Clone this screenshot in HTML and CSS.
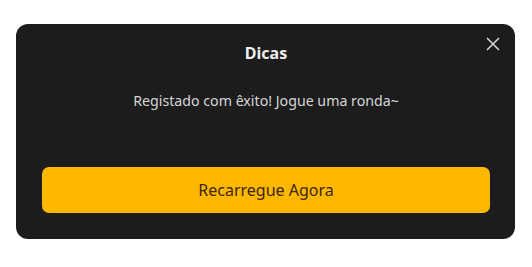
FILE: index.html
```html
<!DOCTYPE html>
<html lang="pt">
<head>
<meta charset="utf-8">
<link rel="stylesheet" href="styles.css">
</head>
<body>
<div class="modal">
  <div class="modal-header">
    <h2 class="modal-title">Dicas</h2>
    <button class="close" aria-label="Fechar">
      <svg width="14" height="14" viewBox="0 0 14 14"><path d="M1 1 L13 13 M13 1 L1 13" stroke="#d8d8d8" stroke-width="1.5" fill="none"/></svg>
    </button>
  </div>
  <p class="message">Registado com êxito! Jogue uma ronda~</p>
  <button class="cta">Recarregue Agora</button>
</div>
</body>
</html>
```
FILE: styles.css
```css
html, body { margin: 0; padding: 0; background: #ffffff; }
body { font-family: "Noto Sans", "Open Sans", sans-serif; }
.modal {
  position: relative;
  box-sizing: border-box;
  width: 499px;
  height: 215px;
  margin: 24px 0 0 16px;
  background: #1c1c1c;
  border-radius: 12px;
  padding: 18px 25px 26px 26px;
  display: flex;
  flex-direction: column;
}
.modal-header { display: flex; justify-content: center; }
.modal-title {
  margin: 0;
  font-size: 16px;
  font-weight: 700;
  line-height: 22px;
  color: #f0f0f0;
}
.close {
  position: absolute;
  top: 10px;
  right: 12px;
  background: none;
  border: 0;
  padding: 0;
  width: 20px;
  height: 20px;
  display: flex;
  align-items: center;
  justify-content: center;
}
.message {
  margin: 27px 0 0;
  text-align: center;
  font-size: 14.2px;
  line-height: 20px;
  color: #d6d6d6;
}
.cta {
  margin-top: auto;
  height: 46px;
  border: 0;
  border-radius: 7px;
  background: #ffb800;
  color: #3d2600;
  font-family: inherit;
  font-size: 16px;
}
```
